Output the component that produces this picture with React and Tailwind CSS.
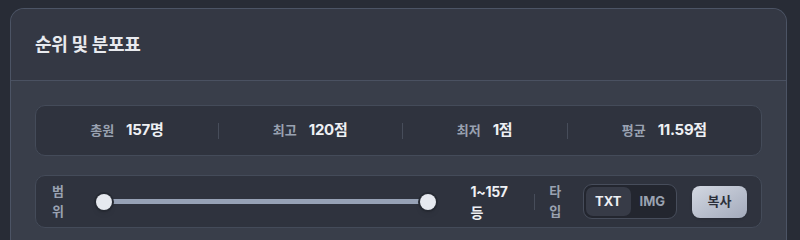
import React, { useState } from 'react';

function Stat({ label, value }) {
  return (
    <div className="flex-auto flex items-center justify-center gap-3">
      <span className="text-[13px] font-semibold text-[#9aa2b1]">{label}</span>
      <span className="text-[15px] font-bold text-[#eef0f4] tracking-[-0.3px]">{value}</span>
    </div>
  );
}

function Divider() {
  return <div className="w-px h-4 bg-[#474d5a]"></div>;
}

export default function App() {
  const [type, setType] = useState('TXT');

  return (
    <div
      className="w-[800px] h-[240px] overflow-hidden bg-[#282c36] pt-2 pl-[10px] pr-[13px]"
      style={{ fontFamily: 'Inter, "Noto Sans CJK KR", sans-serif' }}
    >
      <div className="rounded-t-[14px] border border-b-0 border-[#4c5465] bg-[#393e4a] h-[260px] overflow-hidden">
        {/* Header */}
        <div className="h-[72px] bg-[#343844] border-b border-[#4a5161] flex items-center px-6">
          <h2 className="text-[18px] font-bold text-[#e8eaef] tracking-[-0.3px]">순위 및 분포표</h2>
        </div>

        <div className="px-6 pt-6">
          {/* Summary */}
          <div className="h-[51px] rounded-[10px] border border-[#444b59] bg-[#2f333e] flex items-center">
            <Stat label="총원" value="157명" />
            <Divider />
            <Stat label="최고" value="120점" />
            <Divider />
            <Stat label="최저" value="1점" />
            <Divider />
            <Stat label="평균" value="11.59점" />
          </div>

          {/* Controls */}
          <div className="mt-[19px] h-[53px] rounded-[10px] border border-[#444b59] bg-[#2f333e] flex items-center pl-4 pr-[14px]">
            <span className="text-[13px] font-semibold text-[#9aa2b1]">범위</span>
            <div className="relative ml-5 w-[340px] h-4 flex items-center">
              <div className="mx-2 h-[5px] flex-1 rounded-full bg-[#97a2b6]"></div>
              <div className="absolute left-0 top-0 w-4 h-4 rounded-full bg-[#e6e9ef] ring-2 ring-[#262a33] shadow-md"></div>
              <div className="absolute right-0 top-0 w-4 h-4 rounded-full bg-[#e6e9ef] ring-2 ring-[#262a33] shadow-md"></div>
            </div>
            <span className="ml-[35px] text-[14px] font-bold text-[#eef0f4] tracking-[-0.3px]">1~157등</span>
            <div className="ml-[14px] w-px h-4 bg-[#474d5a]"></div>
            <span className="ml-[14px] text-[13px] font-semibold text-[#9aa2b1]">타입</span>
            <div className="ml-[10px] h-[35px] rounded-[9px] border border-[#474d5b] bg-[#23262f] flex items-center p-[2px]">
              {['TXT', 'IMG'].map((t) => (
                <button
                  key={t}
                  onClick={() => setType(t)}
                  className={
                    type === t
                      ? 'h-full px-[9px] rounded-[7px] bg-[#373b47] text-[13px] font-bold text-[#eef0f4]'
                      : 'h-full px-[9px] rounded-[7px] text-[13px] font-bold text-[#9aa2b1]'
                  }
                >
                  {t}
                </button>
              ))}
            </div>
            <button className="ml-[15px] h-[32px] w-[55px] rounded-[8px] bg-gradient-to-br from-[#d3d8e2] to-[#a3aabb] text-[13px] font-bold text-[#2b2f3a] shadow">
              복사
            </button>
          </div>
        </div>
      </div>
    </div>
  );
}
